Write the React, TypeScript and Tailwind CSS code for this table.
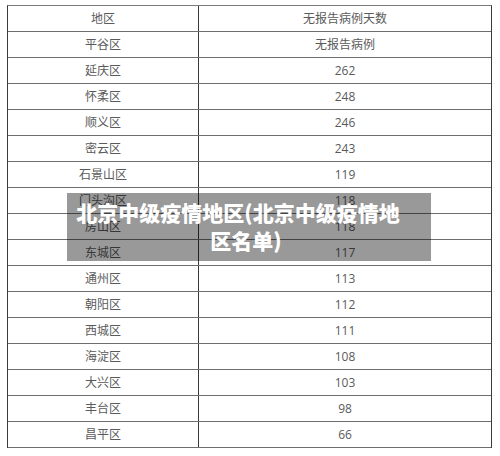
const rows: [string, string][] = [
  ["平谷区", "无报告病例"],
  ["延庆区", "262"],
  ["怀柔区", "248"],
  ["顺义区", "246"],
  ["密云区", "243"],
  ["石景山区", "119"],
  ["门头沟区", "118"],
  ["房山区", "118"],
  ["东城区", "117"],
  ["通州区", "113"],
  ["朝阳区", "112"],
  ["西城区", "111"],
  ["海淀区", "108"],
  ["大兴区", "103"],
  ["丰台区", "98"],
  ["昌平区", "66"],
];

const App = () => {
  return (
    <div
      className="relative w-[500px] h-[456px] bg-white overflow-hidden"
      style={{ fontFamily: '"Open Sans", "Noto Sans CJK SC", sans-serif' }}
    >
      {/* Table */}
      <div className="ml-[7px] pt-[5px] w-[485px]">
        <div className="border-t border-[#7a7a7a] border-l border-r border-l-[#3a3a3a] border-r-[#3a3a3a] text-[12px] text-[#5a5a5a]">
          <div className="flex h-[26px] border-b border-[#6e6e6e]">
            <div className="w-[191px] border-r border-[#3a3a3a] flex items-center justify-center">地区</div>
            <div className="flex-1 flex items-center justify-center">无报告病例天数</div>
          </div>
          {rows.map(([name, days]) => (
            <div key={name} className="flex h-[26px] border-b border-[#6e6e6e]">
              <div className="w-[191px] border-r border-[#3a3a3a] flex items-center justify-center">{name}</div>
              <div className="flex-1 flex items-center justify-center">{days}</div>
            </div>
          ))}
        </div>
      </div>

      {/* Title overlay */}
      <div className="absolute left-[67px] top-[193px] w-[364px] h-[68px] bg-black/40 flex flex-col justify-center pb-[3px]">
        <p
          className="text-center text-white font-black text-[21px] leading-[28px] whitespace-nowrap"
          style={{ fontFamily: '"Noto Sans CJK SC", sans-serif' }}
        >
          <span className="block pr-[22px]">北京中级疫情地区(北京中级疫情地</span>
          <span className="block pr-[6px]">区名单)</span>
        </p>
      </div>
    </div>
  );
};

export default App;
